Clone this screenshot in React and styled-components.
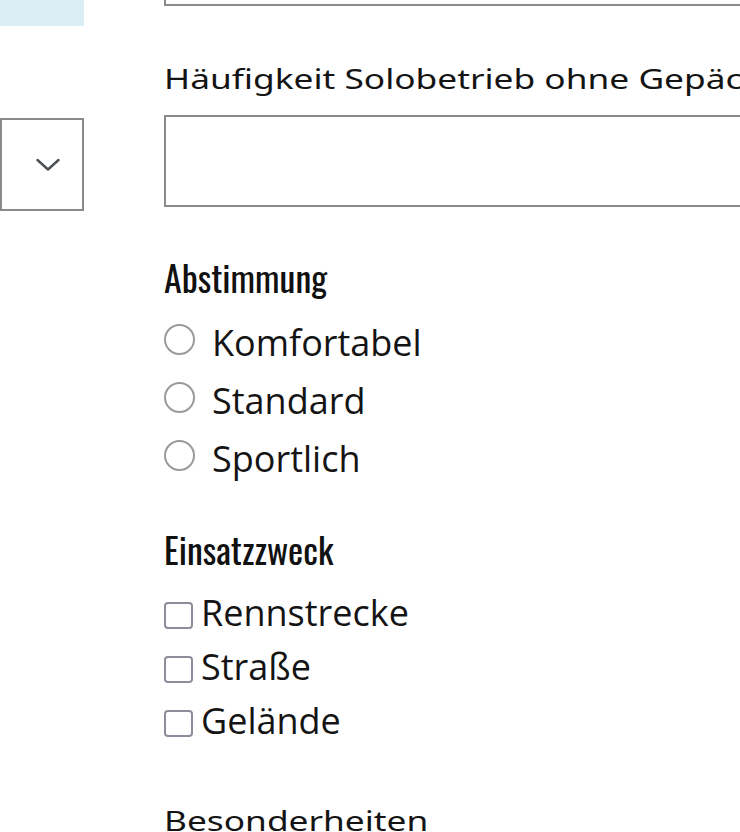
import React from 'react';
import styled, { createGlobalStyle } from 'styled-components';

const Global = createGlobalStyle`
  html, body { margin: 0; padding: 0; background: #fff; overflow: hidden; }
  body { font-family: "Open Sans", "Liberation Sans", sans-serif; color: #141414; }
  * { box-sizing: border-box; }
`;

const Page = styled.div`
  display: grid;
  grid-template-columns: 84px 700px;
  column-gap: 80px;
  margin-top: -88px;
  width: 864px;
`;

const Column = styled.div`
  display: flex;
  flex-direction: column;
`;

const InfoBox = styled.div`
  height: 114px;
  background: #dbeef5;
`;

const SelectBox = styled.div`
  margin-top: 92px;
  height: 93px;
  border: 2px solid #8a8a86;
  display: flex;
  align-items: center;
  justify-content: flex-end;
  padding-right: 22px;
  color: #4a5057;
`;

const TextInput = styled.div`
  height: ${p => p.$h}px;
  border: 2px solid #8a8a86;
  background: #fff;
`;

const FieldLabel = styled.div`
  margin-top: ${p => p.$mt}px;
  margin-bottom: ${p => p.$mb || 0}px;
  font-family: "Noto Sans", "Open Sans", sans-serif;
  font-size: 28px;
  line-height: 42px;
  white-space: nowrap;
  transform: scaleX(1.26);
  transform-origin: left center;
`;

const Heading = styled.div`
  margin-top: ${p => p.$mt}px;
  font-family: "Oswald", "Liberation Sans Narrow", "DejaVu Sans Condensed", "Open Sans", sans-serif;
  font-weight: 400;
  font-size: 36px;
  line-height: 40px;
  color: #111;
`;

const Group = styled.div`
  margin-top: 17px;
  display: flex;
  flex-direction: column;
`;

const OptionRow = styled.label`
  display: flex;
  align-items: flex-start;
  height: ${p => p.$h}px;
  font-size: 36px;
  line-height: ${p => p.$h}px;
  gap: ${p => p.$gap}px;
  white-space: nowrap;
`;

const RadioCircle = styled.span`
  margin-top: 10px;
  width: 31px;
  height: 31px;
  border-radius: 50%;
  border: 2px solid #9a9a98;
  flex: none;
`;

const CheckSquare = styled.span`
  margin-top: 16px;
  width: 29px;
  height: 27px;
  border-radius: 4px;
  border: 2px solid #8f8b9a;
  flex: none;
`;

const Chevron = () => (
  <svg width="24" height="14" viewBox="0 0 24 14" fill="none">
    <path d="M1.5 2 L12 11.5 L22.5 2" stroke="currentColor" strokeWidth="2.4" strokeLinecap="round" strokeLinejoin="round" />
  </svg>
);

const radios = ['Komfortabel', 'Standard', 'Sportlich'];
const checks = ['Rennstrecke', 'Straße', 'Gelände'];

export default function App() {
  return (
    <>
      <Global />
      <Page>
        <Column>
          <InfoBox />
          <SelectBox>
            <Chevron />
          </SelectBox>
        </Column>
        <Column>
          <TextInput $h={94} />
          <FieldLabel $mt={51} $mb={16}>Häufigkeit Solobetrieb ohne Gepäck</FieldLabel>
          <TextInput $h={92} />
          <Heading $mt={50}>Abstimmung</Heading>
          <Group>
            {radios.map(r => (
              <OptionRow key={r} $h={58} $gap={17}>
                <RadioCircle />
                {r}
              </OptionRow>
            ))}
          </Group>
          <Heading $mt={41}>Einsatzzweck</Heading>
          <Group>
            {checks.map(c => (
              <OptionRow key={c} $h={54} $gap={8}>
                <CheckSquare />
                {c}
              </OptionRow>
            ))}
          </Group>
          <FieldLabel $mt={51}>Besonderheiten</FieldLabel>
        </Column>
      </Page>
    </>
  );
}
